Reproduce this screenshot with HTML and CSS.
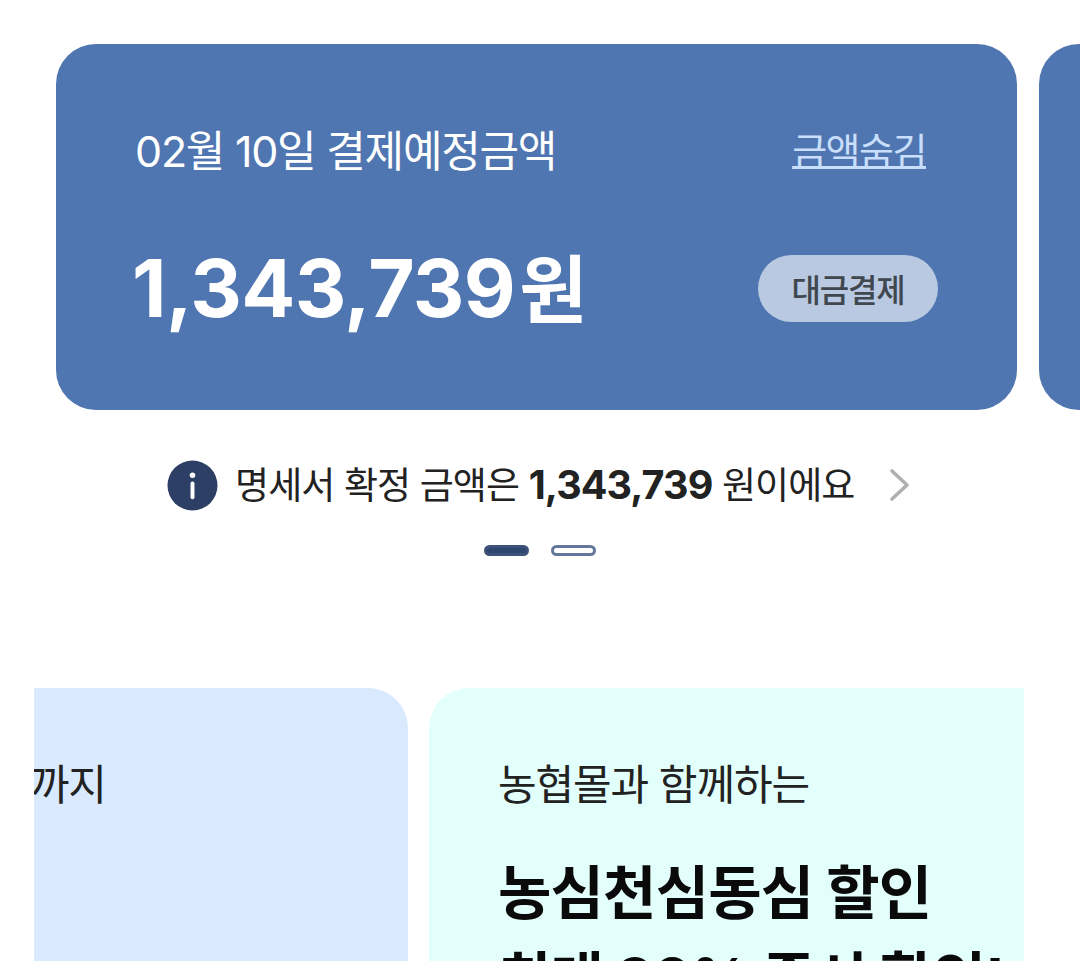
FILE: index.html
```html
<!DOCTYPE html>
<html lang="ko">
<head>
<meta charset="utf-8">
<title>결제예정금액</title>
<link rel="stylesheet" href="styles.css">
</head>
<body>
<section class="carousel">
  <article class="bill">
    <div class="bill-row">
      <span class="bill-title">02월 10일 결제예정금액</span>
      <a class="bill-hide">금액숨김</a>
    </div>
    <div class="bill-row bill-row-amount">
      <span class="bill-amount">1,343,739<span class="won">원</span></span>
      <button class="pay">대금결제</button>
    </div>
  </article>
  <article class="bill bill-next"></article>
</section>
<div class="notice">
  <svg class="info" viewBox="0 0 52 52" aria-hidden="true">
    <circle cx="26" cy="26" r="25.5" fill="#2e3f66"/>
    <circle cx="26" cy="15.5" r="2.8" fill="#fff"/>
    <rect x="24" y="22" width="4" height="18" rx="2" fill="#fff"/>
  </svg>
  <p class="notice-text">명세서 확정 금액은 <b>1,343,739</b> 원이에요</p>
  <svg class="chev" viewBox="0 0 22 34" aria-hidden="true">
    <path d="M3 3 L18 17 L3 31" fill="none" stroke="#b0b0b0" stroke-width="3.6" stroke-linecap="round" stroke-linejoin="round"/>
  </svg>
</div>
<div class="dots">
  <span class="dot dot-on"></span>
  <span class="dot"></span>
</div>
<section class="promos">
  <article class="promo promo-blue">
    <p class="promo-sub promo-sub-end">2월 28일까지</p>
  </article>
  <article class="promo promo-mint">
    <p class="promo-sub">농협몰과 함께하는</p>
    <h2 class="promo-title">농심천심동심 할인<br>최대 30% 즉시 할인!</h2>
  </article>
</section>
</body>
</html>
```
FILE: styles.css
```css
* { box-sizing: border-box; }
html, body { margin: 0; height: 961px; overflow: hidden; background: #fff; }
body { font-family: Inter, "Noto Sans CJK KR", sans-serif; color: #222; }
.carousel { display: flex; gap: 22px; padding: 44px 0 0 56px; overflow: hidden; }
.bill { flex: 0 0 961px; height: 366px; background: #4f76b1; border-radius: 40px; padding: 82px 79px 0 76px; color: #fff; }
.bill-row { display: flex; justify-content: space-between; align-items: center; height: 50px; padding-right: 12px; }
.bill-row-amount { margin-top: 78px; height: 68px; padding-right: 0; }
.bill-title { font-size: 43px; font-weight: 400; letter-spacing: -1.25px; margin-left: 3px; line-height: 50px; }
.bill-hide { font-size: 38px; font-weight: 400; letter-spacing: -1.5px; line-height: 50px; margin-left: 2px; color: #c9defb; text-decoration: underline; text-underline-offset: 1px; text-decoration-thickness: 3px; }
.bill-amount { font-size: 80px; font-weight: 700; letter-spacing: -0.6px; line-height: 68px; padding-top: 2px; }
.won { margin-left: 4px; font-size: 74px; }
.pay { width: 180px; height: 67px; border: 0; border-radius: 34px; background: #b9c9e1; color: #41474f; font: 500 32px Inter, "Noto Sans CJK KR", sans-serif; letter-spacing: -1.2px; padding: 0; }
.notice { display: flex; align-items: center; margin-top: 50px; padding-left: 167px; height: 52px; }
.info { width: 51px; height: 51px; flex: none; margin-top: -2px; }
.notice-text { margin: 0 0 0 17px; padding-bottom: 6px; font-size: 37px; letter-spacing: -0.9px; color: #222; white-space: nowrap; }
.notice-text b { font-weight: 700; font-size: 39.5px; }
.chev { width: 22px; height: 34px; margin-left: 35px; flex: none; margin-top: -2px; }
.dots { display: flex; justify-content: center; gap: 22px; margin-top: 33px; padding-left: 0; }
.dot { width: 45px; height: 11px; border-radius: 6px; border: 3px solid #63789a; background: #fff; }
.dot-on { background: #2e4570; border-color: #3c5279; }
.promos { display: flex; gap: 21px; margin: 132px 56px 0 34px; height: 400px; overflow: hidden; }
.promo { flex: none; height: 400px; border-radius: 40px; padding-top: 70px; }
.promo-blue { width: 374px; background: #d9e9fe; border-radius: 0 40px 0 0; overflow: hidden; }
.promo-mint { width: 595px; background: #e2fffb; padding-left: 69px; border-radius: 40px 0 0 0; }
.promo-sub { margin: 0; font-size: 42px; letter-spacing: -1.1px; line-height: 54px; color: #222; white-space: nowrap; }
.promo-sub-end { margin-left: -163px; }
.promo-title { margin: 38px 0 0; font-size: 58px; font-weight: 700; letter-spacing: -0.8px; line-height: 86px; color: #0a0a0a; white-space: nowrap; }
```
